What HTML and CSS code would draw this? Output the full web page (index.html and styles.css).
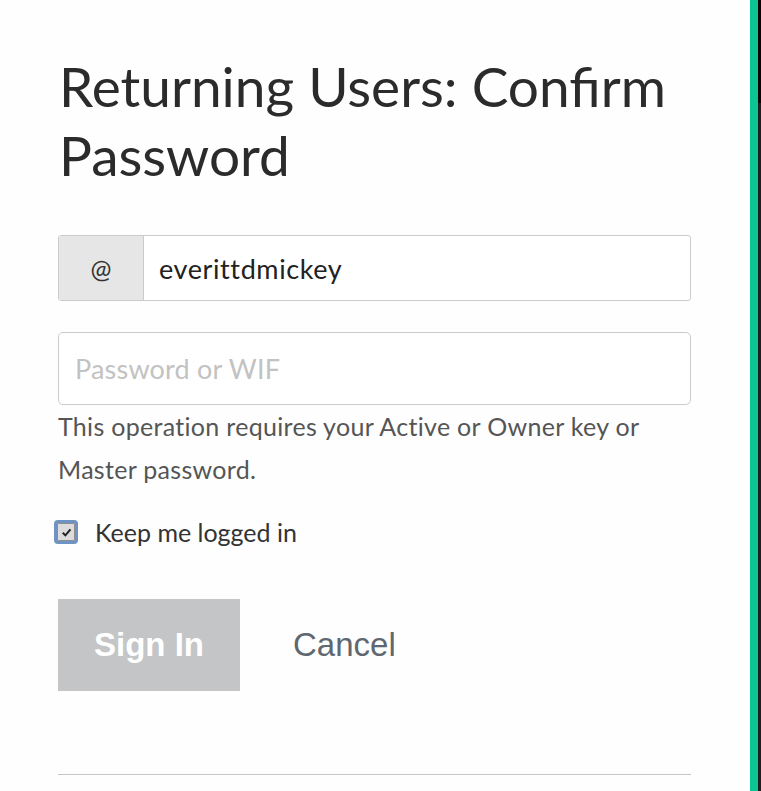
FILE: index.html
```html
<!DOCTYPE html>
<html>
<head>
<meta charset="utf-8">
<link rel="stylesheet" href="styles.css">
</head>
<body>
<div class="page">
  <main class="main">
    <h1 class="title">Returning Users: Confirm Password</h1>
    <div class="input-group">
      <span class="addon">@</span>
      <span class="field-value">everittdmickey</span>
    </div>
    <div class="password">Password or WIF</div>
    <p class="help">This operation requires your Active or Owner key or Master password.</p>
    <label class="keep">
      <span class="checkbox"><svg viewBox="0 0 10 10" width="11" height="11"><path d="M1.6 5.2 L4 7.6 L8.6 2.2" fill="none" stroke="#222" stroke-width="1.8"/></svg></span>
      <span>Keep me logged in</span>
    </label>
    <div class="actions">
      <span class="btn-signin">Sign In</span>
      <span class="btn-cancel">Cancel</span>
    </div>
    <div class="rule"></div>
  </main>
  <div class="strip-green"></div>
  <div class="strip-dark">
    <div class="dark-top"></div>
    <div class="dark-rest"></div>
  </div>
</div>
</body>
</html>
```

FILE: styles.css
```css
html, body {
  margin: 0;
  padding: 0;
  background: #fefefe;
}
.page {
  display: flex;
  width: 761px;
  height: 791px;
  overflow: hidden;
}
.main {
  flex: 1;
  padding: 52px 59px 0 58px;
  font-family: Lato, "Liberation Sans", sans-serif;
  color: #333;
  background: #fefefe;
}
.title {
  margin: 0 0 0 1px;
  font-weight: 400;
  font-size: 55px;
  line-height: 69px;
  color: #2b2b2b;
}
.input-group {
  display: flex;
  height: 66px;
  margin-top: 45px;
  border: 1px solid #cbcbcb;
  border-radius: 3px;
  box-sizing: border-box;
  background: #fff;
}
.addon {
  width: 84px;
  display: flex;
  align-items: center;
  justify-content: center;
  background: #e6e6e6;
  border-right: 1px solid #cbcbcb;
  font-size: 25px;
  color: #333;
}
.field-value {
  display: flex;
  align-items: center;
  padding-left: 15px;
  font-size: 27px;
  letter-spacing: 0.6px;
  color: #222;
}
.password {
  margin-top: 31px;
  height: 73px;
  border: 1px solid #cbcbcb;
  border-radius: 5px;
  box-sizing: border-box;
  background: #fff;
  display: flex;
  align-items: center;
  padding-left: 16px;
  font-size: 27px;
  letter-spacing: 0.2px;
  color: #c2c2c2;
}
.help {
  margin: 0;
  font-size: 25px;
  letter-spacing: 0.3px;
  line-height: 43px;
  color: #555;
}
.keep {
  display: flex;
  align-items: center;
  margin-top: 26px;
  margin-left: -4px;
  font-size: 25px;
  color: #333;
  gap: 17px;
}
.checkbox {
  width: 18px;
  height: 18px;
  border: 3px solid #6f93c2;
  border-radius: 4px;
  background: #dcdcdc;
  box-shadow: inset 0 0 0 1px #8e8e8e;
  display: flex;
  align-items: center;
  justify-content: center;
}
.actions {
  display: flex;
  align-items: center;
  margin-top: 52px;
}
.btn-signin {
  width: 182px;
  height: 92px;
  background: #c4c5c7;
  color: #fff;
  display: flex;
  align-items: center;
  justify-content: center;
  font-family: "Liberation Sans", Arial, sans-serif;
  font-weight: 700;
  font-size: 33px;
}
.btn-cancel {
  margin-left: 53px;
  font-family: "Liberation Sans", Arial, sans-serif;
  font-size: 33px;
  color: #5f6870;
}
.rule {
  margin-top: 83px;
  height: 1px;
  background: #c6c6c6;
}
.strip-green {
  width: 8px;
  background: #0bc592;
}
.strip-dark {
  width: 3px;
  display: flex;
  flex-direction: column;
}
.dark-top {
  height: 103px;
  background: #0a0505;
}
.dark-rest {
  flex: 1;
  background: #1e1e1e;
}
```
